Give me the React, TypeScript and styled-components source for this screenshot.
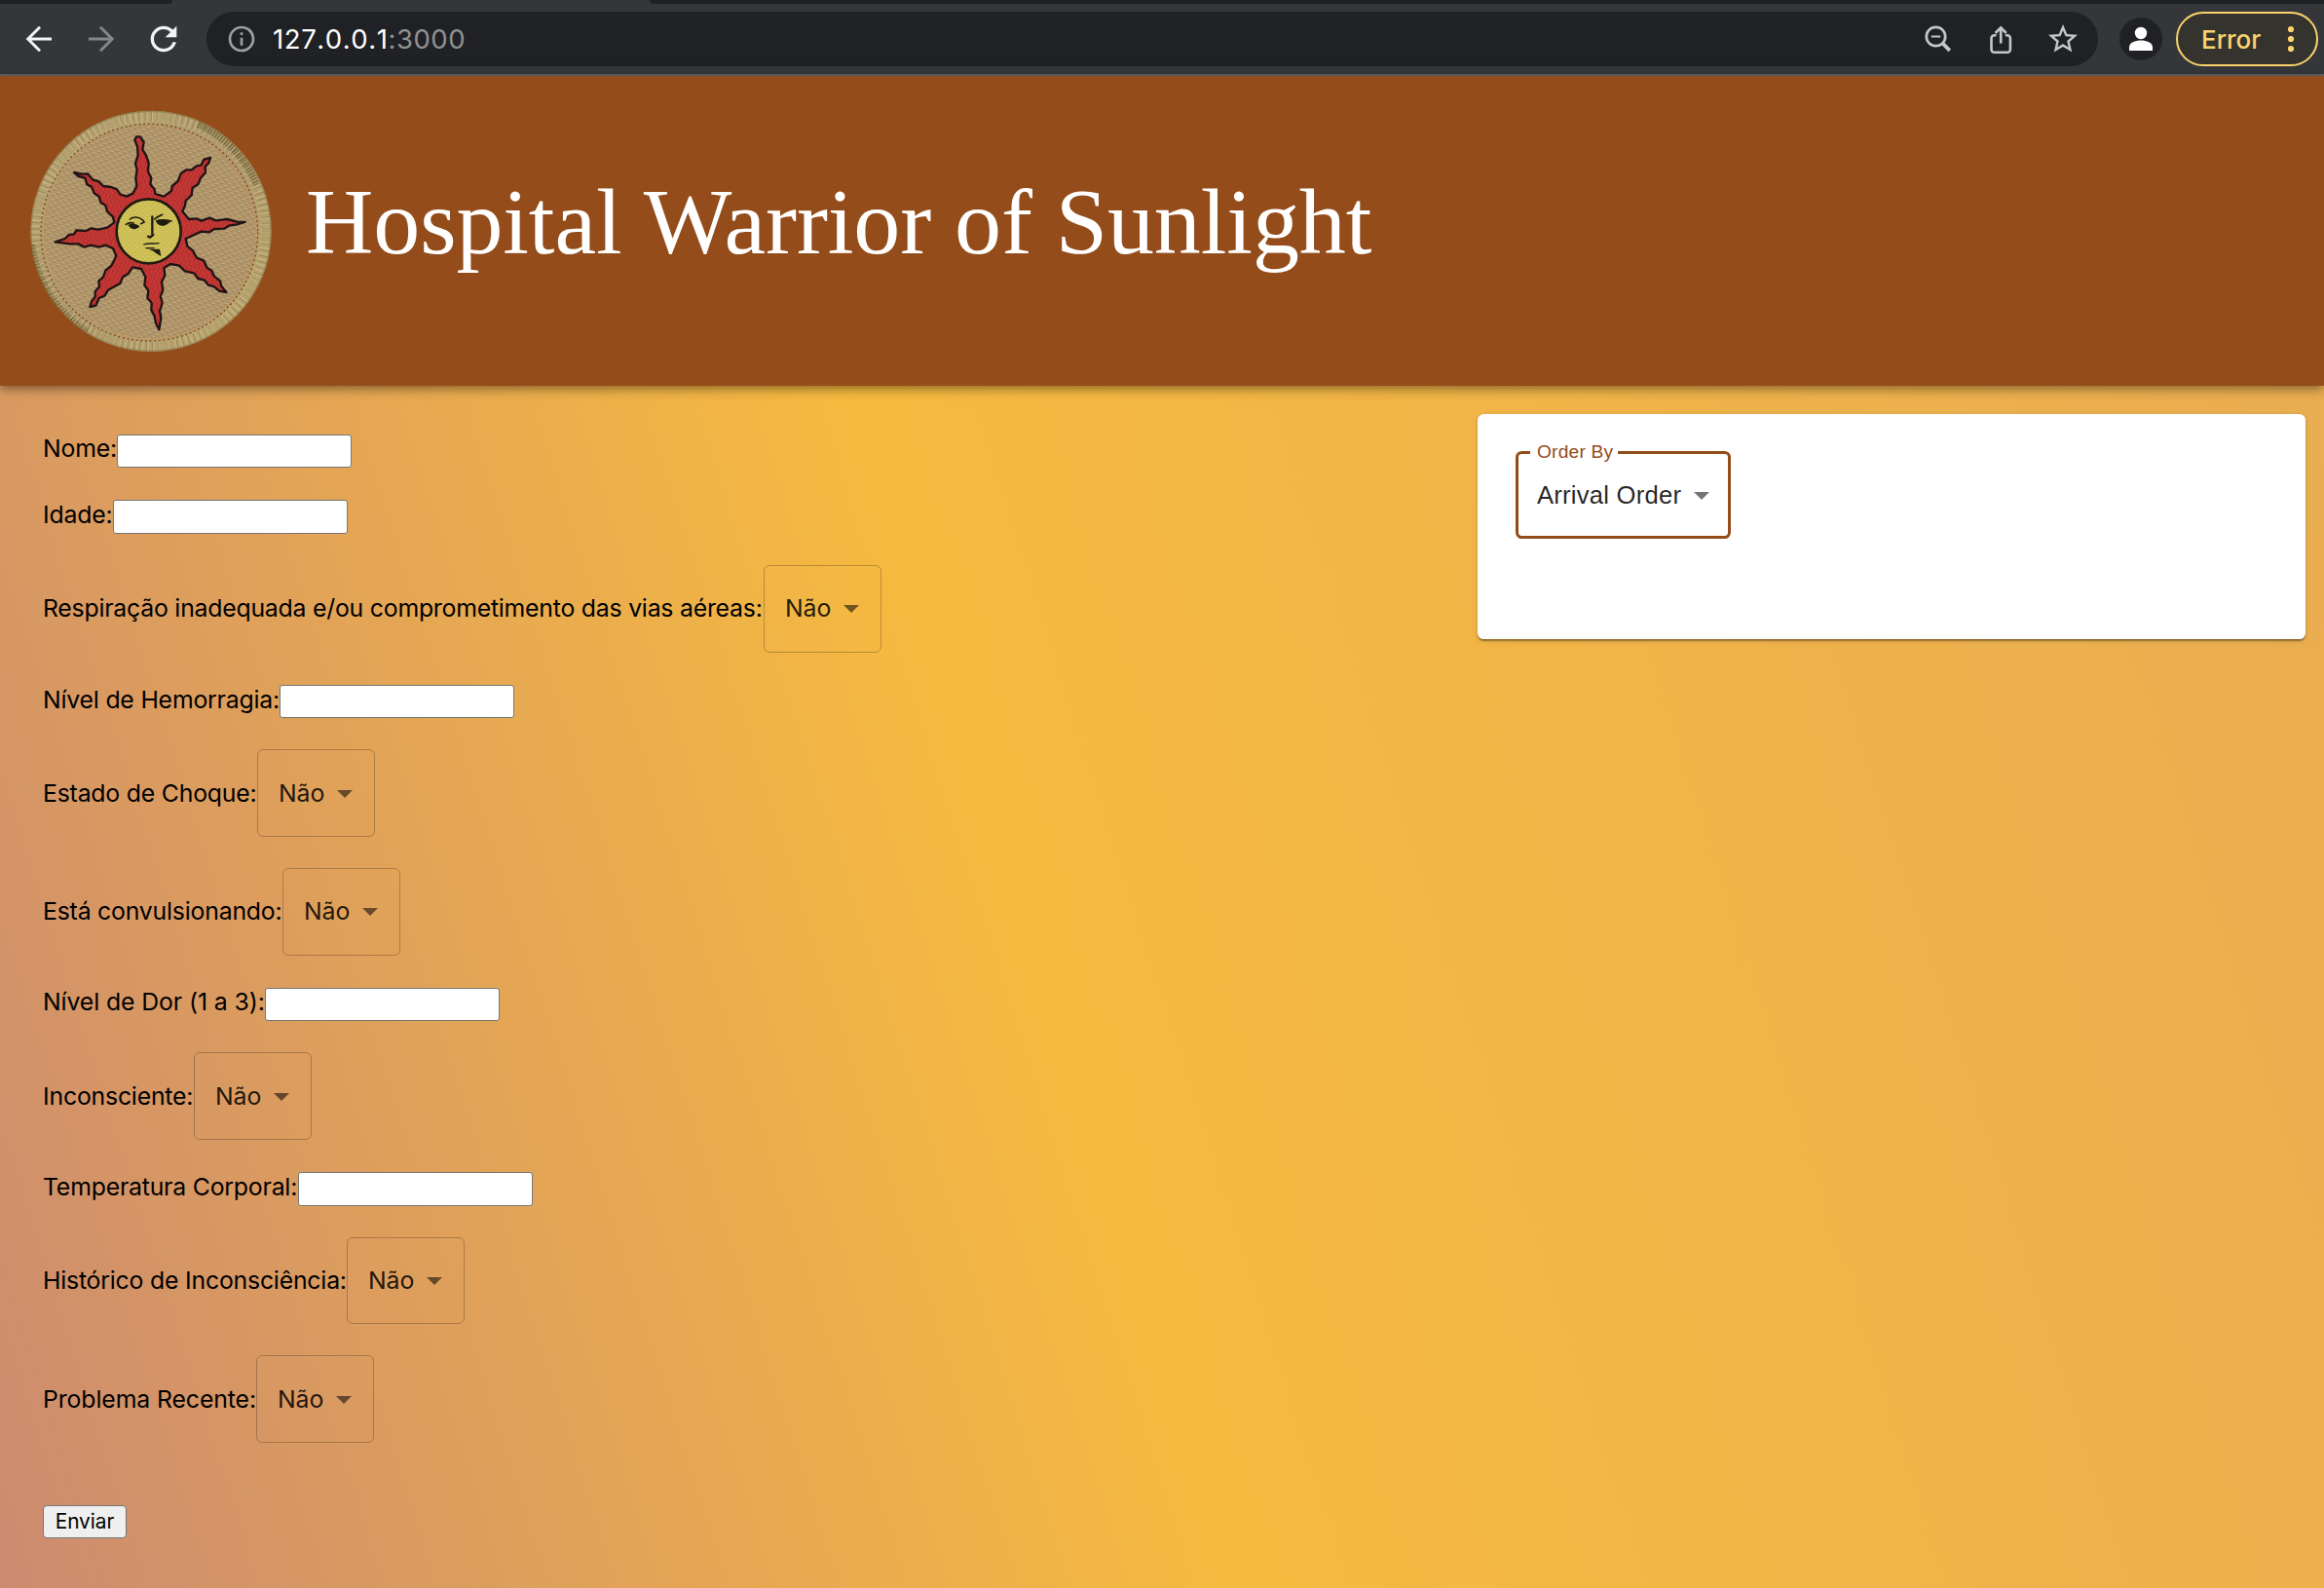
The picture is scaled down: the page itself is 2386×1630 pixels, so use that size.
import React from "react";
import styled, { createGlobalStyle } from "styled-components";

const UI_FONT = `Inter, "Liberation Sans", sans-serif`;
const ARIAL = `"Liberation Sans", Arial, sans-serif`;
const BROWN = "#934c1a";

const GlobalStyle = createGlobalStyle`
  *, *::before, *::after { box-sizing: border-box; }
  html, body { margin: 0; padding: 0; }
  body { font-family: ${UI_FONT}; overflow: hidden; }
`;

const Window = styled.div`
  display: flex;
  flex-direction: column;
  width: 2386px;
  height: 1630px;
  overflow: hidden;
`;

/* Browser chrome */
const TabStrip = styled.div`
  display: flex;
  justify-content: space-between;
  height: 4px;
  background: #35363a;
`;

const TabGutter = styled.div<{ $width: number; $side: "left" | "right" }>`
  width: ${(p) => p.$width}px;
  background: #202124;
  border-radius: ${(p) => (p.$side === "left" ? "0 0 9px 0" : "0 0 0 9px")};
`;

const Toolbar = styled.div`
  display: flex;
  align-items: center;
  height: 74px;
  padding: 0 6px 0 20px;
  background: #35363a;
  border-bottom: 2px solid #5d5f64;
`;

const NavButtons = styled.div`
  display: flex;
  gap: 24px;
  margin-right: 24px;

  svg {
    display: block;
    width: 40px;
    height: 40px;
  }
`;

const AddressBar = styled.div`
  display: flex;
  align-items: center;
  width: 1942px;
  height: 56px;
  padding: 0 18px 0 20px;
  border-radius: 28px;
  background: #202124;
`;

const Url = styled.div`
  flex: 1;
  margin-left: 16px;
  display: flex;
  align-items: center;
  font-size: 27.5px;
  line-height: 34px;
  color: #fff;
`;

const Host = styled.span`
  font-kerning: none;
  letter-spacing: 0.6px;
`;

const Port = styled.span`
  color: #8f9194;
  letter-spacing: 0.5px;
`;

const AddressActions = styled.div`
  display: flex;
  gap: 28px;

  svg {
    display: block;
    width: 36px;
    height: 36px;
  }
`;

const Avatar = styled.div`
  width: 44px;
  height: 44px;
  margin: 0 14px 0 22px;
  border-radius: 50%;
  background: #202124;

  svg {
    display: block;
  }
`;

const ErrorButton = styled.div`
  display: flex;
  align-items: center;
  justify-content: space-between;
  width: 146px;
  height: 56px;
  padding: 0 22px 0 24px;
  border: 2px solid #fbd46d;
  border-radius: 28px;
  background: #35332e;
  color: #fbd46d;
  font-size: 26px;
  font-weight: 500;

  svg {
    display: block;
  }
`;

/* Page */
const AppBar = styled.header`
  position: relative;
  z-index: 1;
  display: flex;
  align-items: center;
  height: 318px;
  padding-left: 30px;
  background: ${BROWN};
  box-shadow: 0 3.2px 6.4px -1.6px rgba(0, 0, 0, 0.2),
    0 6.4px 8px 0 rgba(0, 0, 0, 0.14), 0 1.6px 16px 0 rgba(0, 0, 0, 0.12);

  svg {
    display: block;
    flex: none;
  }
`;

const Title = styled.h1`
  margin: 0 0 0 34px;
  padding-bottom: 18px;
  font-family: "Liberation Serif", "Times New Roman", serif;
  font-size: 96px;
  font-weight: 400;
  line-height: 1.2;
  letter-spacing: -0.1px;
  color: #fff;
`;

const Main = styled.main`
  flex: 1;
  display: flex;
  justify-content: space-between;
  align-items: flex-start;
  padding: 29px 19px 0 44px;
  background: linear-gradient(72.4deg, #cc8b70 0px, #f6ba40 1201px, #e9ad52 2647px);
`;

const Form = styled.form`
  display: flex;
  flex-direction: column;
  align-items: flex-start;
  gap: 32px;
  padding-top: 20px;
`;

const FieldRow = styled.div<{ $height: number; $kind: "text" | "select" }>`
  display: flex;
  align-items: flex-start;
  height: ${(p) => p.$height}px;
  margin-top: ${(p) => (p.$kind === "text" ? 1 : 0)}px;
`;

const Label = styled.label<{ $width: number; $top: number; $tracking?: number }>`
  width: ${(p) => p.$width}px;
  margin-top: ${(p) => p.$top}px;
  font-size: 24.8px;
  line-height: 30px;
  letter-spacing: ${(p) => p.$tracking ?? -0.2}px;
  white-space: nowrap;
  color: #000;
`;

const TextInput = styled.input`
  align-self: stretch;
  width: 241px;
  border: 1px solid #767676;
  border-radius: 3px;
  background: #fff;
  outline: none;
`;

const Select = styled.div<{ $top: number }>`
  display: flex;
  align-items: flex-start;
  align-self: stretch;
  justify-content: space-between;
  width: 121px;
  padding: ${(p) => p.$top - 1}px 22px 0 21px;
  border: 1px solid rgba(0, 0, 0, 0.23);
  border-radius: 6px;
  font-size: 24.8px;
  line-height: 30px;
  letter-spacing: -0.1px;
  color: rgba(0, 0, 0, 0.87);
`;

const Caret = styled.span<{ $drop?: number }>`
  width: 0;
  height: 0;
  margin-top: ${(p) => p.$drop ?? 2}px;
  border: 8px solid transparent;
  border-top-color: rgba(0, 0, 0, 0.54);
  border-bottom: 0;
`;

const SubmitButton = styled.button`
  width: 86px;
  height: 34px;
  margin-top: 32px;
  padding: 0 0 1px;
  border: 1px solid #767676;
  border-radius: 4px;
  background: #efefef;
  font-family: ${UI_FONT};
  font-size: 20.8px;
  line-height: 26px;
  color: #000;
`;

const Card = styled.section`
  width: 850px;
  height: 231px;
  padding: 38px 39px;
  border-radius: 6.4px;
  background: #fff;
  box-shadow: 0 3.2px 1.6px -1.6px rgba(0, 0, 0, 0.2),
    0 1.6px 1.6px 0 rgba(0, 0, 0, 0.14), 0 1.6px 4.8px 0 rgba(0, 0, 0, 0.12);
`;

const OrderSelect = styled.div`
  position: relative;
  display: flex;
  align-items: center;
  justify-content: space-between;
  width: 221px;
  height: 90px;
  padding: 0 19px 0 19px;
  border: 3px solid ${BROWN};
  border-radius: 6.4px;
  font-family: ${ARIAL};
  font-size: 25.6px;
  line-height: 36px;
  letter-spacing: 0.24px;
  color: rgba(0, 0, 0, 0.87);
`;

const OrderLabel = styled.span`
  position: absolute;
  top: -14px;
  left: 12px;
  padding: 0 5px 0 7px;
  background: #fff;
  font-size: 19.2px;
  line-height: 24px;
  letter-spacing: 0.18px;
  white-space: nowrap;
  color: ${BROWN};
`;

const BackIcon = () => (
  <svg viewBox="0 0 40 40" fill="none" stroke="#f1f3f4" strokeWidth="3">
    <path d="M33 20H9M21 7.8 8.8 20 21 32.2" />
  </svg>
);

const ForwardIcon = () => (
  <svg viewBox="0 0 40 40" fill="none" stroke="#85868a" strokeWidth="3">
    <path d="M7 20h24M19 7.8 31.2 20 19 32.2" />
  </svg>
);

const ReloadIcon = () => (
  <svg viewBox="0 0 24 24" fill="#f1f3f4">
    <path d="M17.65 6.35A7.958 7.958 0 0 0 12 4c-4.42 0-7.99 3.58-7.99 8s3.57 8 7.99 8c3.73 0 6.84-2.55 7.73-6h-2.08A5.99 5.99 0 0 1 12 18c-3.31 0-6-2.69-6-6s2.69-6 6-6c1.66 0 3.14.69 4.22 1.78L13 11h7V4l-2.35 2.35z" />
  </svg>
);

const InfoIcon = () => (
  <svg width="32" height="32" viewBox="0 0 24 24" fill="#9aa0a6">
    <path d="M11 7h2v2h-2zm0 4h2v6h-2zm1-9C6.48 2 2 6.48 2 12s4.48 10 10 10 10-4.48 10-10S17.52 2 12 2zm0 18c-4.41 0-8-3.59-8-8s3.59-8 8-8 8 3.59 8 8-3.59 8-8 8z" />
  </svg>
);

const ZoomOutIcon = () => (
  <svg viewBox="0 0 36 36" fill="none" stroke="#c4c5c7">
    <circle cx="15.5" cy="15.5" r="9.7" strokeWidth="2.7" />
    <path d="M10.8 15.5h9.4" strokeWidth="2" />
    <path d="m22.4 22.4 7.4 7.4" strokeWidth="3.8" />
  </svg>
);

const ShareIcon = () => (
  <svg viewBox="0 0 36 36" fill="none" stroke="#c4c5c7" strokeWidth="2.6">
    <path d="M13.5 14.3h-2a3 3 0 0 0-3 3v11.4a3 3 0 0 0 3 3h13.4a3 3 0 0 0 3-3V17.3a3 3 0 0 0-3-3h-2" />
    <path d="M18.2 22.5V7M12.6 12l5.6-5.6 5.6 5.6" />
  </svg>
);

const StarIcon = () => (
  <svg viewBox="0 0 24 24" fill="#c4c5c7">
    <path d="m22 9.24-7.19-.62L12 2 9.19 8.63 2 9.24l5.46 4.73L5.82 21 12 17.27 18.18 21l-1.63-7.03L22 9.24zM12 15.4l-3.76 2.27 1-4.28-3.32-2.88 4.38-.38L12 6.1l1.71 4.04 4.38.38-3.32 2.88 1 4.28L12 15.4z" />
  </svg>
);

const PersonIcon = () => (
  <svg width="44" height="44" viewBox="0 0 44 44" fill="#fff">
    <circle cx="22" cy="16" r="6.2" />
    <path d="M10 34v-3.500C10 26 16 23.500 22 23.500S34 26 34 30.500V34z" />
  </svg>
);

const DotsIcon = () => (
  <svg width="8" height="28" viewBox="0 0 8 28" fill="#fbd46d">
    <circle cx="4" cy="4" r="3.1" />
    <circle cx="4" cy="14" r="3.1" />
    <circle cx="4" cy="24" r="3.1" />
  </svg>
);

const RAYS =
  "300,272 320,262 331,240 328,215 332,190 327,170 335,145 333,118 325,98 330,88 342,88 353,105 349,128 360,145 368,170 366,195 376,215 373,235 386,250 388,264 415,272 " +
  "438,255 440,240 458,225 468,200 484,190 500,190 515,178 530,175 538,158 558,153 552,170 542,180 543,198 528,215 520,235 503,245 500,268 482,285 480,300 472,318 " +
  "492,342 515,340 530,347 555,338 575,346 610,342 640,350 665,351 640,358 615,362 600,371 570,372 555,382 530,380 512,388 482,402 " +
  "487,425 505,440 515,460 538,470 548,492 562,500 570,518 588,532 592,548 607,567 585,563 570,550 552,545 540,530 520,525 508,508 480,502 462,485 435,480 " +
  "415,492 418,515 408,535 412,560 404,580 410,600 402,625 406,645 400,682 390,662 386,640 376,622 377,600 364,585 367,562 355,545 358,520 345,495 318,490 " +
  "305,510 288,520 280,540 258,552 243,560 232,578 215,585 205,608 187,612 192,595 203,580 203,565 216,550 214,532 228,520 235,500 253,485 268,455 " +
  "258,432 235,422 215,428 190,422 170,428 150,418 125,418 80,412 110,402 122,390 138,388 145,376 175,378 190,370 212,374 240,368 262,352 " +
  "258,335 240,318 235,300 220,290 215,272 200,262 192,242 178,235 172,215 152,210 138,198 162,203 180,202 195,220 215,226 228,240 252,243 270,250 280,265";

const SunPatch = () => (
  <svg width="250" height="252" viewBox="0 0 750 756">
    <defs>
      <linearGradient id="rim" x1="0" y1="0" x2="1" y2="1">
        <stop offset="0" stopColor="#b9a573" />
        <stop offset="0.5" stopColor="#ad986a" />
        <stop offset="1" stopColor="#bda870" />
      </linearGradient>
      <pattern id="weave" width="26" height="18" patternUnits="userSpaceOnUse" patternTransform="rotate(14)">
        <rect width="26" height="18" fill="#b0956a" />
        <path d="M2 5h10M15 14h10" stroke="#c6ac80" strokeWidth="4" />
        <path d="M2 9h10M15 18h10M15 0h10" stroke="#957a51" strokeWidth="2.6" />
      </pattern>
      <pattern id="redThread" width="14" height="18" patternUnits="userSpaceOnUse" patternTransform="rotate(-12)">
        <rect width="14" height="18" fill="#bd3230" />
        <path d="M3 0v9M10 8v10" stroke="#cf4540" strokeWidth="2.6" />
        <path d="M7 2v10" stroke="#a02624" strokeWidth="2" />
      </pattern>
      <pattern id="goldThread" width="16" height="14" patternUnits="userSpaceOnUse">
        <rect width="16" height="14" fill="#cdbf54" />
        <path d="M2 3h8M9 10h7" stroke="#ddd16a" strokeWidth="3" />
        <path d="M2 6h8M9 13h7" stroke="#b0a243" strokeWidth="1.6" />
      </pattern>
    </defs>
    <circle cx="375" cy="379" r="350" fill="url(#weave)" />
    <circle cx="375" cy="379" r="351" fill="none" stroke="url(#rim)" strokeWidth="40" />
    <circle cx="375" cy="379" r="353" fill="none" stroke="#d8c795" strokeWidth="34" strokeDasharray="4 13" opacity="0.5" />
    <circle cx="375" cy="379" r="355" fill="none" stroke="#75673b" strokeWidth="28" strokeDasharray="3 16" opacity="0.4" />
    <circle cx="375" cy="379" r="369" fill="none" stroke="#7c6b3e" strokeWidth="4" opacity="0.5" />
    <path d="M520 50A360 360 0 0 1 700 235" fill="none" stroke="#4d401d" strokeWidth="20" strokeDasharray="5 4" opacity="0.5" />
    <path d="M12 420A364 364 0 0 0 180 685" fill="none" stroke="#4d401d" strokeWidth="14" strokeDasharray="6 4" opacity="0.4" />
    <circle cx="370" cy="383" r="331" fill="none" stroke="#c3935f" strokeWidth="7" strokeDasharray="9 5" />
    <circle cx="370" cy="383" r="334" fill="none" stroke="#5d4727" strokeWidth="4" strokeDasharray="5 9" />
    <polygon points={RAYS} fill="url(#redThread)" stroke="#1f1415" strokeWidth="7" strokeLinejoin="round" />
    <circle cx="368" cy="379" r="99" fill="url(#goldThread)" stroke="#1f1a12" strokeWidth="8" />
    <g fill="none" stroke="#1f1c10" strokeWidth="5" strokeLinecap="round">
      <path d="M310 342c10-9 28-8 40 3l4 6-10 5M298 358c8-6 16-6 24-4" />
      <path d="M386 342c8-8 14-10 24-14M392 348c14-6 30-4 46 0" />
      <path d="M379 334v54M366 395l6 3 10-8" strokeWidth="7" />
      <path d="M353 420c14-6 26-1 46-4M360 431h24" strokeWidth="4" />
    </g>
    <g fill="#1f1c10">
      <path d="M304 360c10-6 28-6 36 4-8 12-26 12-36-4z" />
      <path d="M390 347c10-5 26-5 46 3-8 4-12 10-22 12-10 2-20-4-24-15z" />
      <path d="M368 434h34l4 22-14-8-10-8z" />
    </g>
  </svg>
);

type Field = {
  label: string;
  kind: "text" | "select";
  width: number;
  height: number;
  top: number;
  tracking?: number;
};

const FIELDS: Field[] = [
  { label: "Nome:", kind: "text", width: 76, height: 34, top: -1 },
  { label: "Idade:", kind: "text", width: 72, height: 35, top: 0 },
  {
    label: "Respiração inadequada e/ou comprometimento das vias aéreas:",
    kind: "select",
    width: 740,
    height: 90,
    top: 29,
    tracking: -0.22,
  },
  { label: "Nível de Hemorragia:", kind: "text", width: 243, height: 34, top: 0 },
  { label: "Estado de Choque:", kind: "select", width: 220, height: 90, top: 30 },
  { label: "Está convulsionando:", kind: "select", width: 246, height: 90, top: 29 },
  { label: "Nível de Dor (1 a 3):", kind: "text", width: 228, height: 34, top: -1, tracking: -0.1 },
  { label: "Inconsciente:", kind: "select", width: 155, height: 90, top: 30 },
  { label: "Temperatura Corporal:", kind: "text", width: 262, height: 35, top: 0 },
  { label: "Histórico de Inconsciência:", kind: "select", width: 312, height: 89, top: 29 },
  { label: "Problema Recente:", kind: "select", width: 219, height: 90, top: 30, tracking: -0.1 },
];

export default function App() {
  return (
    <Window>
      <GlobalStyle />
      <TabStrip>
        <TabGutter $width={177} $side="left" />
        <TabGutter $width={1719} $side="right" />
      </TabStrip>
      <Toolbar>
        <NavButtons>
          <BackIcon />
          <ForwardIcon />
          <ReloadIcon />
        </NavButtons>
        <AddressBar>
          <InfoIcon />
          <Url>
            <Host>127.0.0.1</Host>
            <Port>:3000</Port>
          </Url>
          <AddressActions>
            <ZoomOutIcon />
            <ShareIcon />
            <StarIcon />
          </AddressActions>
        </AddressBar>
        <Avatar>
          <PersonIcon />
        </Avatar>
        <ErrorButton>
          Error
          <DotsIcon />
        </ErrorButton>
      </Toolbar>
      <AppBar>
        <SunPatch />
        <Title>Hospital Warrior of Sunlight</Title>
      </AppBar>
      <Main>
        <Form onSubmit={(e) => e.preventDefault()}>
          {FIELDS.map(({ label, kind, width, height, top, tracking }) => (
            <FieldRow key={label} $height={height} $kind={kind}>
              <Label $width={width} $top={top} $tracking={tracking}>
                {label}
              </Label>
              {kind === "select" ? (
                <Select $top={top}>
                  Não
                  <Caret $drop={12} />
                </Select>
              ) : (
                <TextInput type="text" />
              )}
            </FieldRow>
          ))}
          <SubmitButton type="submit">Enviar</SubmitButton>
        </Form>
        <Card>
          <OrderSelect>
            <OrderLabel>Order By</OrderLabel>
            Arrival Order
            <Caret />
          </OrderSelect>
        </Card>
      </Main>
    </Window>
  );
}
